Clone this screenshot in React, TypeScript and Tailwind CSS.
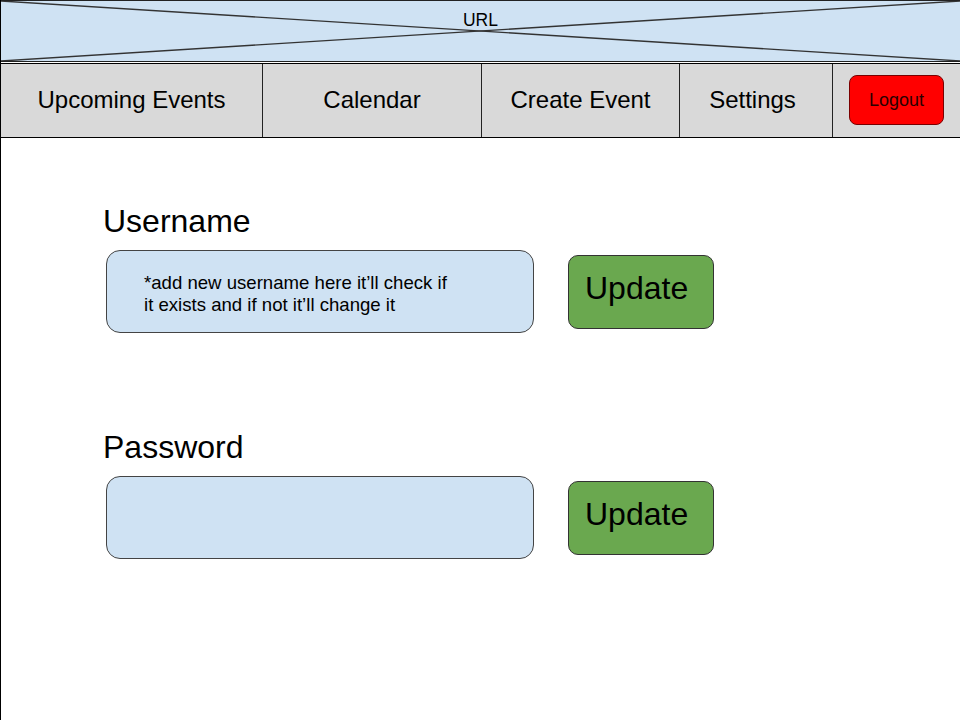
const navItems = [
  { label: 'Upcoming Events', w: 'w-[262px]', pad: '' },
  { label: 'Calendar', w: 'w-[219px]', pad: '' },
  { label: 'Create Event', w: 'w-[198px]', pad: '' },
  { label: 'Settings', w: 'w-[153px]', pad: 'pr-[7px]' },
]

// Wireframe placeholder cross for the address bar
const CrossLines = () => (
  <svg className="absolute inset-0 h-full w-full" viewBox="0 0 960 62" preserveAspectRatio="none">
    <line x1="0" y1="0" x2="960" y2="62" stroke="#333" strokeWidth="1.4" />
    <line x1="0" y1="62" x2="960" y2="0" stroke="#333" strokeWidth="1.4" />
  </svg>
)

const FieldRow = ({ children }: { children?: React.ReactNode }) => (
  <div className="mt-[12px] ml-[3px] flex items-center gap-[34px]">
    <div className="flex h-[83px] w-[428px] items-center rounded-[14px] border border-[#444] bg-[#cfe2f3] pl-[37px] pt-[5px]">
      {children}
    </div>
    <button className="h-[74px] w-[146px] rounded-[10px] border border-[#333] bg-[#6aa84f] pb-[8px] pl-[16px] text-left text-[32px] text-black">
      Update
    </button>
  </div>
)

export default function App() {
  return (
    <div className="relative h-[720px] w-[960px] overflow-hidden border-l border-black bg-white font-['Liberation_Sans',Arial,sans-serif] text-black">
      {/* address bar */}
      <div className="relative h-[62px] border-y border-[#222] bg-[#cfe2f3]">
        <CrossLines />
        <div className="relative pt-[8px] text-center text-[17.5px] leading-[22px]">URL</div>
      </div>

      {/* nav */}
      <nav className="mt-px flex h-[75px] border-y border-black bg-[#d9d9d9]">
        {navItems.map((item) => (
          <div
            key={item.label}
            className={`${item.w} ${item.pad} flex shrink-0 items-center justify-center border-r border-[#222] pb-[2px] text-[24px]`}
          >
            {item.label}
          </div>
        ))}
        <div className="flex flex-1 items-center justify-center">
          <button className="mb-[1px] h-[50px] w-[95px] rounded-[8px] border border-[#7a0000] bg-[#ff0000] text-[18px] text-[#2a0000]">
            Logout
          </button>
        </div>
      </nav>

      <main className="pl-[102px] pt-[66px]">
        <h2 className="text-[32px] leading-[34px]">Username</h2>
        <FieldRow>
          <p className="text-[18.6px] leading-[22px]">
            *add new username here it’ll check if
            <br />
            it exists and if not it’ll change it
          </p>
        </FieldRow>

        <h2 className="mt-[97px] text-[32px] leading-[34px]">Password</h2>
        <FieldRow />
      </main>
    </div>
  )
}
